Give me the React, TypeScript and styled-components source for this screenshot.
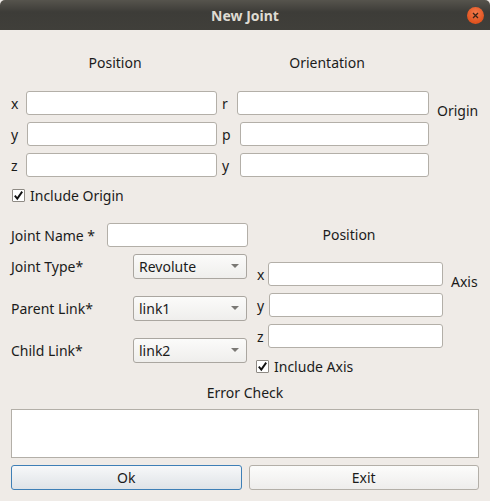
import React from "react";
import styled, { createGlobalStyle } from "styled-components";

const Global = createGlobalStyle`
  html, body { margin: 0; padding: 0; background: #efebe7; }
  body { font-family: "Noto Sans", "Open Sans", sans-serif; font-size: 14px; color: #1b1b1b; }
  * { box-sizing: border-box; }
`;

const Window = styled.div`
  width: 490px;
  height: 501px;
  background: #efebe7;
  display: flex;
  flex-direction: column;
  overflow: hidden;
`;

const TitleBar = styled.div`
  height: 30px;
  flex: none;
  background: linear-gradient(#56544d, #3d3c38 40%, #403f3a);
  border-radius: 5px 5px 0 0;
  display: grid;
  grid-template-columns: 40px 1fr 40px;
  align-items: center;
`;

const Title = styled.div`
  grid-column: 2;
  text-align: center;
  font-weight: 700;
  font-size: 14px;
  color: #dfdbd2;
`;

const CloseBtn = styled.div`
  grid-column: 3;
  justify-self: end;
  margin-right: 6px;
  width: 17px;
  height: 17px;
  border-radius: 50%;
  background: radial-gradient(circle at 50% 35%, #f47a4c, #e0531f 70%);
  display: flex;
  align-items: center;
  justify-content: center;
`;

const Body = styled.div`
  flex: 1;
  padding: 0 11px;
  display: flex;
  flex-direction: column;
`;

const HeaderRow = styled.div`
  height: 61px;
  display: flex;
  align-items: center;
  padding-top: 3px;
`;

const Header = styled.div<{ $center: number }>`
  width: 0;
  margin-left: ${(p) => p.$center}px;
  display: flex;
  justify-content: center;
  white-space: nowrap;
`;

const OriginGrid = styled.div`
  display: flex;
  flex-direction: column;
  gap: 7px;
`;

const FieldRow = styled.div`
  display: flex;
  align-items: center;
  height: 24px;
`;

const Label = styled.span<{ $w?: number; $pl?: number }>`
  width: ${(p) => (p.$w != null ? `${p.$w}px` : "auto")};
  padding-left: ${(p) => p.$pl ?? 0}px;
  flex: none;
  white-space: nowrap;
`;

const Input = styled.div<{ $w: number }>`
  width: ${(p) => p.$w}px;
  height: 24px;
  flex: none;
  background: #fff;
  border: 1px solid #b3afa8;
  border-radius: 3px;
`;

const SideLabel = styled.span<{ $dy: number }>`
  margin-left: 8px;
  position: relative;
  top: ${(p) => p.$dy}px;
`;

const CheckRow = styled.div<{ $mt: number; $ml?: number }>`
  display: flex;
  align-items: center;
  gap: 5px;
  margin-top: ${(p) => p.$mt}px;
  margin-left: ${(p) => p.$ml ?? 1}px;
  height: 14px;
`;

const Box = styled.div`
  width: 13px;
  height: 13px;
  background: #fff;
  border: 1px solid #8e8a84;
  border-radius: 1px;
  display: flex;
  align-items: center;
  justify-content: center;
`;

const Section2 = styled.div`
  display: grid;
  grid-template-columns: 245px 1fr;
  margin-top: 21px;
`;

const Column = styled.div`
  display: flex;
  flex-direction: column;
`;

const LRow = styled.div<{ $mt: number }>`
  display: flex;
  align-items: center;
  margin-top: ${(p) => p.$mt}px;
  height: 24px;
`;

const Combo = styled.div`
  width: 114px;
  height: 25px;
  margin-left: auto;
  margin-right: 9px;
  border: 1px solid #aaa6a0;
  border-radius: 3px;
  background: linear-gradient(#fbfbfa, #efeeec);
  display: flex;
  align-items: center;
  padding: 0 7px 0 5px;
  justify-content: space-between;
`;

const Arrow = styled.div`
  width: 0;
  height: 0;
  border-left: 4px solid transparent;
  border-right: 4px solid transparent;
  border-top: 4px solid #7a7874;
`;

const AxisHeader = styled.div`
  height: 24px;
  display: flex;
  align-items: center;
  justify-content: center;
  width: 186px;
  margin-top: -1px;
`;

const AxisRows = styled.div`
  display: flex;
  flex-direction: column;
  gap: 7px;
  margin-top: 16px;
`;

const ErrorLabel = styled.div`
  text-align: center;
  margin-top: 11px;
  height: 18px;
  line-height: 18px;
`;

const TextArea = styled.div`
  margin-top: 7px;
  height: 49px;
  background: #fff;
  border: 1px solid #b3afa8;
`;

const Buttons = styled.div`
  display: grid;
  grid-template-columns: 1fr 1fr;
  gap: 7px;
  margin-top: 7px;
`;

const Button = styled.div<{ $focus?: boolean }>`
  height: 25px;
  border-radius: 3px;
  border: 1px solid ${(p) => (p.$focus ? "#3e7fb6" : "#b3afa8")};
  background: ${(p) =>
    p.$focus ? "linear-gradient(#f7f8f9, #dfe3e7)" : "linear-gradient(#fcfcfb, #eeedec)"};
  display: flex;
  align-items: center;
  justify-content: center;
`;

const Check = () => (
  <Box>
    <svg width="11" height="11" viewBox="0 0 11 11">
      <path d="M1.8 5.6 L4.3 8.6 L9.2 1.6" fill="none" stroke="#111" strokeWidth="1.9" />
    </svg>
  </Box>
);

const ComboBox = ({ value }: { value: string }) => (
  <Combo>
    <span>{value}</span>
    <Arrow />
  </Combo>
);

export default function App() {
  return (
    <Window>
      <Global />
      <TitleBar>
        <Title>New Joint</Title>
        <CloseBtn>
          <svg width="7" height="7" viewBox="0 0 7 7">
            <path d="M1 1 L6 6 M6 1 L1 6" stroke="#3a2418" strokeWidth="1.3" />
          </svg>
        </CloseBtn>
      </TitleBar>
      <Body>
        <HeaderRow>
          <Header $center={104}>Position</Header>
          <Header $center={212}>Orientation</Header>
        </HeaderRow>
        <OriginGrid>
          <FieldRow>
            <Label $w={15}>x</Label>
            <Input $w={191} />
            <Label $w={20} $pl={5}>r</Label>
            <Input $w={192} />
            <SideLabel $dy={7}>Origin</SideLabel>
          </FieldRow>
          <FieldRow>
            <Label $w={16}>y</Label>
            <Input $w={190} />
            <Label $w={23} $pl={5}>p</Label>
            <Input $w={189} />
          </FieldRow>
          <FieldRow>
            <Label $w={15}>z</Label>
            <Input $w={191} />
            <Label $w={23} $pl={5}>y</Label>
            <Input $w={189} />
          </FieldRow>
        </OriginGrid>
        <CheckRow $mt={11}>
          <Check />
          <span>Include Origin</span>
        </CheckRow>
        <Section2>
          <Column>
            <LRow $mt={0}>
              <Label $w={96}>Joint Name *</Label>
              <Input $w={141} />
            </LRow>
            <LRow $mt={7}>
              <Label>Joint Type*</Label>
              <ComboBox value="Revolute" />
            </LRow>
            <LRow $mt={18}>
              <Label>Parent Link*</Label>
              <ComboBox value="link1" />
            </LRow>
            <LRow $mt={18}>
              <Label>Child Link*</Label>
              <ComboBox value="link2" />
            </LRow>
          </Column>
          <Column>
            <AxisHeader>Position</AxisHeader>
            <AxisRows>
              <FieldRow>
                <Label $w={12} $pl={1}>x</Label>
                <Input $w={175} />
                <SideLabel $dy={7}>Axis</SideLabel>
              </FieldRow>
              <FieldRow>
                <Label $w={13} $pl={1}>y</Label>
                <Input $w={174} />
              </FieldRow>
              <FieldRow>
                <Label $w={12} $pl={1}>z</Label>
                <Input $w={175} />
              </FieldRow>
            </AxisRows>
            <CheckRow $mt={11} $ml={0}>
              <Check />
              <span>Include Axis</span>
            </CheckRow>
          </Column>
        </Section2>
        <ErrorLabel>Error Check</ErrorLabel>
        <TextArea />
        <Buttons>
          <Button $focus>Ok</Button>
          <Button>Exit</Button>
        </Buttons>
      </Body>
    </Window>
  );
}
